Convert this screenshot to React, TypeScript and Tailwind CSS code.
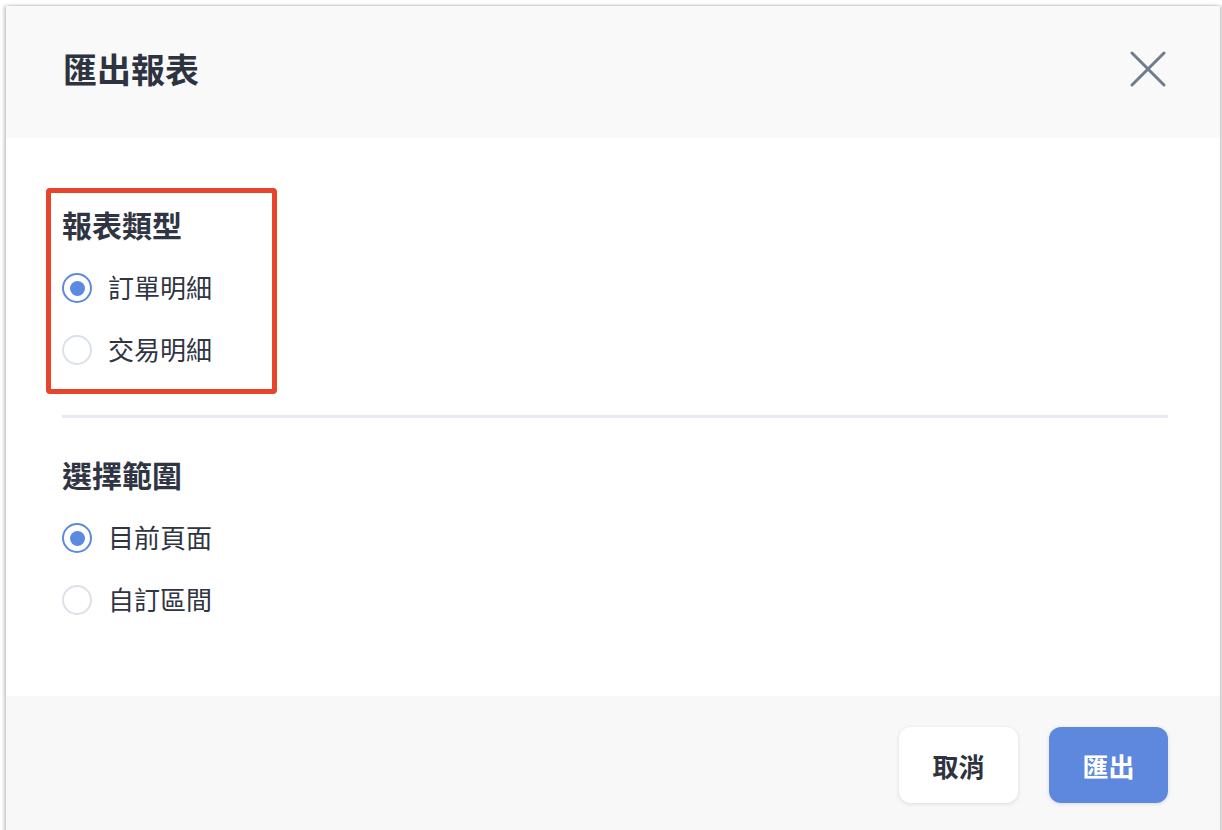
import React, { useState } from 'react';

const font = { fontFamily: '"Noto Sans CJK TC", "Noto Sans", sans-serif' };

type Option = { value: string; label: string };

const Radio = ({ checked, label, onClick }: { checked: boolean; label: string; onClick: () => void }) => (
  <button type="button" onClick={onClick} className="flex h-[62px] items-center gap-[16px] text-left">
    <span
      className={
        checked
          ? 'flex h-[30px] w-[30px] items-center justify-center rounded-full border-2 border-[#5b8ae0] bg-white'
          : 'flex h-[30px] w-[30px] items-center justify-center rounded-full border-2 border-[#dbe1ea] bg-white'
      }
    >
      {checked && <span className="h-[15px] w-[15px] rounded-full bg-[#5b8ae0]" />}
    </span>
    <span className="mb-[3px] text-[26px] leading-none text-[#2f3542]">{label}</span>
  </button>
);

const RadioGroup = ({
  title,
  options,
  value,
  onChange,
}: {
  title: string;
  options: Option[];
  value: string;
  onChange: (v: string) => void;
}) => (
  <div className="flex flex-col">
    <h3 className="h-[40px] text-[30px] font-bold leading-[36px] text-[#2f3542]">{title}</h3>
    <div className="mt-[11px] flex flex-col">
      {options.map((o) => (
        <Radio key={o.value} checked={value === o.value} label={o.label} onClick={() => onChange(o.value)} />
      ))}
    </div>
  </div>
);

const App = () => {
  const [reportType, setReportType] = useState('order');
  const [range, setRange] = useState('page');

  return (
    <div className="h-[830px] overflow-hidden bg-white" style={font}>
      <div className="ml-[6px] mt-[6px] w-[1214px] bg-white shadow-[-2px_0_3px_rgba(0,0,0,0.22),2px_0_3px_rgba(0,0,0,0.22)]">
        {/* header */}
        <div className="flex h-[132px] items-center justify-between bg-[#f9f9f9] pb-[7px] pl-[57px] pr-[52px]">
          <h2 className="text-[34px] font-bold text-[#2d3340]">匯出報表</h2>
          <button type="button" className="flex h-[40px] w-[40px] items-center justify-center">
            <svg width="36" height="36" viewBox="0 0 36 36" fill="none" stroke="#6f7b8e" strokeWidth="3" strokeLinecap="round">
              <path d="M2 2L34 34M34 2L2 34" />
            </svg>
          </button>
        </div>

        {/* body */}
        <div className="pl-[56px] pr-[52px] pt-[68px] pb-[65px]">
          <div className="relative">
            <div className="pointer-events-none absolute left-[-16px] top-[-18px] h-[206px] w-[231px] rounded-[4px] border-[5px] border-[#e8432b]" />
            <RadioGroup
              title="報表類型"
              value={reportType}
              onChange={setReportType}
              options={[
                { value: 'order', label: '訂單明細' },
                { value: 'trade', label: '交易明細' },
              ]}
            />
          </div>

          <div className="mt-[34px] h-[3px] bg-[#e6e9f1]" />

          <div className="mt-[38px]">
            <RadioGroup
              title="選擇範圍"
              value={range}
              onChange={setRange}
              options={[
                { value: 'page', label: '目前頁面' },
                { value: 'custom', label: '自訂區間' },
              ]}
            />
          </div>
        </div>

        {/* footer */}
        <div className="flex justify-end gap-[31px] bg-[#f8f8f8] pl-[56px] pr-[52px] pt-[31px] pb-[31px]">
          <button
            type="button"
            className="h-[76px] w-[119px] rounded-[12px] bg-white text-[26px] font-bold text-[#2d3340] shadow-[0_1px_4px_rgba(0,0,0,0.12)]"
          >
            取消
          </button>
          <button
            type="button"
            className="h-[76px] w-[119px] rounded-[12px] bg-[#5d88de] text-[26px] font-bold text-white shadow-[0_1px_4px_rgba(0,0,0,0.12)]"
          >
            匯出
          </button>
        </div>
      </div>
    </div>
  );
};

export default App;
